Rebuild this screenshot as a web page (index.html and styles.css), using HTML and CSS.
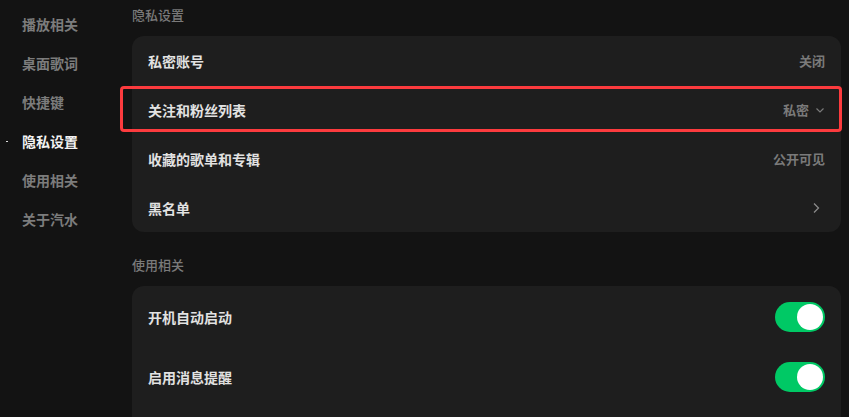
FILE: index.html
```html
<!DOCTYPE html>
<html lang="zh-CN">
<head>
<meta charset="utf-8">
<link rel="stylesheet" href="styles.css">
</head>
<body>
<div class="app">
  <nav class="sidebar">
    <div class="nav-item">播放相关</div>
    <div class="nav-item">桌面歌词</div>
    <div class="nav-item">快捷键</div>
    <div class="nav-item active">隐私设置</div>
    <div class="nav-item">使用相关</div>
    <div class="nav-item">关于汽水</div>
  </nav>
  <main class="content">
    <div class="section-title">隐私设置</div>
    <div class="card">
      <div class="row"><span class="label">私密账号</span><span class="value">关闭</span></div>
      <div class="row highlighted"><span class="label">关注和粉丝列表</span><span class="value">私密<svg class="chev-down" width="10" height="10" viewBox="0 0 10 10"><path d="M1.5 3.5 L5 7 L8.5 3.5" fill="none" stroke="#7a7a7a" stroke-width="1.2"/></svg></span></div>
      <div class="row"><span class="label">收藏的歌单和专辑</span><span class="value">公开可见</span></div>
      <div class="row"><span class="label">黑名单</span><span class="value"><svg class="chev-right" width="10" height="12" viewBox="0 0 10 12"><path d="M3 1.5 L7.5 6 L3 10.5" fill="none" stroke="#8a8a8a" stroke-width="1.3"/></svg></span></div>
    </div>
    <div class="section-title second">使用相关</div>
    <div class="card card-open">
      <div class="row tall"><span class="label">开机自动启动</span><span class="toggle"><span class="knob"></span></span></div>
      <div class="row tall"><span class="label">启用消息提醒</span><span class="toggle"><span class="knob"></span></span></div>
    </div>
  </main>
</div>
</body>
</html>
```
FILE: styles.css
```css
* { box-sizing: border-box; }
html, body {
  margin: 0;
  padding: 0;
  background: #131313;
  width: 849px;
  height: 417px;
  overflow: hidden;
  font-family: "Noto Sans CJK SC", "Noto Sans", sans-serif;
}
.app {
  display: flex;
  height: 417px;
}
.sidebar {
  width: 132px;
  flex: none;
  padding-top: 5px;
  display: flex;
  flex-direction: column;
}
.nav-item {
  position: relative;
  height: 39px;
  line-height: 39px;
  padding-left: 22px;
  font-size: 14px;
  font-weight: 700;
  color: #7c7c7c;
}
.nav-item.active { color: #f2f2f2; }
.nav-item.active::before {
  content: "";
  position: absolute;
  left: 6px;
  top: 19px;
  width: 2px;
  height: 1px;
  background: #dddddd;
}
.content {
  width: 709px;
  flex: none;
}
.section-title {
  padding-top: 5px;
  height: 25px;
  line-height: 20px;
  margin-bottom: 11px;
  font-size: 13px;
  font-weight: 500;
  color: #7a7a7a;
}
.section-title.second {
  margin-top: 18px;
}
.card {
  background: #1e1e1e;
  border-radius: 12px;
  display: flex;
  flex-direction: column;
}
.card-open {
  padding-bottom: 10px;
  border-radius: 12px 12px 0 0;
}
.row {
  position: relative;
  height: 49px;
  display: flex;
  align-items: center;
  justify-content: space-between;
  padding: 0 16px;
}
.row.tall { height: 60px; }
.card .row.tall:first-child { margin-top: 1px; }
.label {
  font-size: 14px;
  font-weight: 700;
  color: #e2e2e2;
}
.value {
  display: flex;
  align-items: center;
  gap: 6px;
  font-size: 13px;
  font-weight: 600;
  color: #7a7a7a;
}
.chev-down { margin-top: 1px; }
.chev-right { margin-right: 4px; }
.row.highlighted::after {
  content: "";
  position: absolute;
  left: -12px;
  right: -1px;
  top: 1px;
  bottom: 2px;
  border: 3px solid #fc3b3e;
  border-radius: 4px;
}
.toggle {
  width: 50px;
  height: 30px;
  border-radius: 15px;
  background: #00c965;
  display: flex;
  align-items: center;
  justify-content: flex-end;
  padding-right: 2px;
}
.knob {
  width: 26px;
  height: 26px;
  border-radius: 50%;
  background: #ffffff;
}
```
